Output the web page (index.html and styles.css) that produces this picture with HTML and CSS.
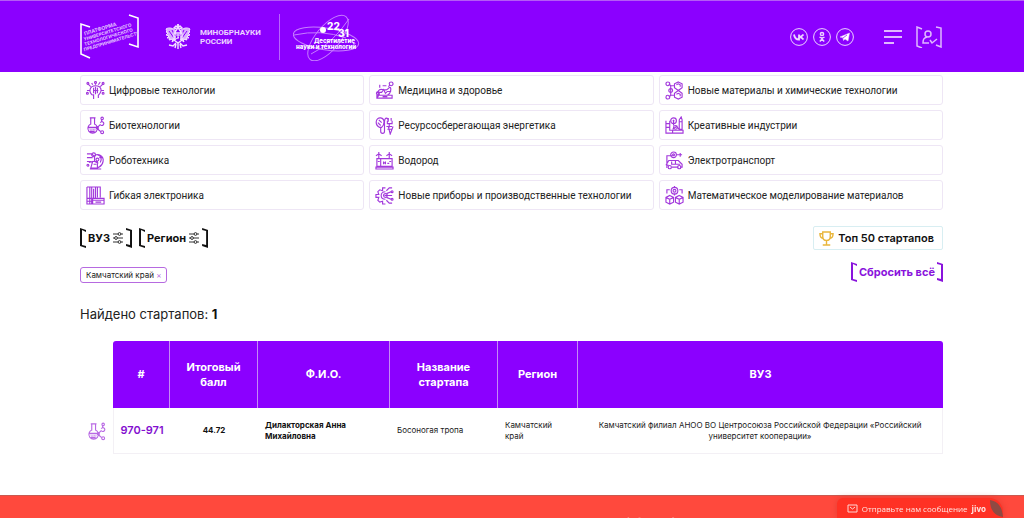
FILE: index.html
```html
<!DOCTYPE html>
<html lang="ru">
<head>
<meta charset="utf-8">
<meta name="viewport" content="width=device-width, initial-scale=1">
<title>Рейтинг стартапов</title>
<link rel="stylesheet" href="styles.css">
</head>
<body>
<svg class="defs" aria-hidden="true">
  <symbol id="flask" viewBox="0 0 20 20"><path d="M4 2h6M5 2v6.500a5 5 0 1 0 4 0V2M2.500 12h9M5 15h.5M8 14.500h.5M4 16.500h5M12 12l3-3M15 9a2 2 0 1 0 0-2M16.500 6V3.500M12.500 14l3 2.500"/><path d="M3 13h8l-2 4H5z" fill="#a238dc" fill-opacity=".35" stroke="none"/><circle cx="17" cy="2.500" r="1.300"/><circle cx="17" cy="17" r="1.500"/><circle cx="12" cy="12.500" r="1"/></symbol>
  <symbol id="filter" viewBox="0 0 12 12"><path d="M1 2h10M1 6h10M1 10h10"/><circle cx="7.500" cy="2" r="1.400"/><circle cx="4" cy="6" r="1.400"/><circle cx="7.500" cy="10" r="1.400"/></symbol>
</svg>

<header class="header">
  <a class="logo-platform" href="#" aria-label="Платформа университетского технологического предпринимательства">
    <svg width="59" height="46" viewBox="0 0 59 46">
      <path d="M10 13L1 10v30l9 4M49 1l9 3v29l-9-3" fill="none" stroke="#fff" stroke-width="1.600"/>
      <g transform="rotate(-17 5 36)" fill="#e3c2ff" font-size="5" font-weight="700"><text x="9" y="22">ПЛАТФОРМА</text><text x="7" y="27" font-size="4.500">УНИВЕРСИТЕТСКОГО</text><text x="6" y="32" font-size="4.500">ТЕХНОЛОГИЧЕСКОГО</text><text x="4" y="37" font-size="4.500">ПРЕДПРИНИМАТЕЛЬСТВА</text></g>
    </svg>
  </a>
  <a class="logo-ministry" href="#">
    <svg width="26" height="26" viewBox="0 0 26 26" fill="none" stroke="#f3e3ff">
      <path d="M11 7C8 4 4 3 1 5l1 2-1 1 2 1-2 2 3 1-2 2 3 0-1 2 4-1-1 3 4-3M15 7c3-3 7-4 10-2l-1 2 1 1-2 1 2 2-3 1 2 2-3 0 1 2-4-1 1 3-4-3" fill="#d9adff"/>
      <path d="M4 7l5 7M7 6l3 6M22 7l-5 7M19 6l-3 6" stroke="#8b00ff"/>
      <path d="M10 8l2-3-3-1 2-2 2 2 2-2 2 2-3 1 2 3M13 0v4M12 1h2M9 9h8v7l-4 3-4-3zM11 19l-3 3-4-1M15 19l3 3 4-1M13 18v7M11 20l-1 4M15 20l1 4" stroke-width="1.400"/>
      <path d="M11 11h4M13 10v5M11 15l3-2"/>
    </svg>
    <span>МИНОБРНАУКИ<br>РОССИИ</span>
  </a>
  <span class="header-rule"></span>
  <a class="logo-decade" href="#" aria-label="Десятилетие науки и технологий">
    <svg width="68" height="48" viewBox="0 0 68 48">
      <g fill="none" stroke="#c77dff"><ellipse cx="33" cy="26" rx="33" ry="11" transform="rotate(9 33 26)"/><ellipse cx="35" cy="25" rx="28" ry="12" transform="rotate(-50 35 25)"/><path d="M1 22q27-6 52 3M18 41Q39 31 56 6"/></g>
      <circle cx="30" cy="17" r="3" fill="#fff"/>
      <g fill="#fff" font-weight="800"><text x="34" y="17" font-size="10">22</text><text x="45" y="24" font-size="10">31</text><text x="21" y="30" font-size="6">Десятилетие</text><text x="3" y="36" font-size="6">науки и технологий</text></g>
    </svg>
  </a>
  <nav class="socials" aria-label="Социальные сети">
    <a href="#" aria-label="ВКонтакте"><svg viewBox="0 0 18 18"><circle cx="9" cy="9" r="8.400"/><path d="M4 6.500c.5 3.500 2 5 5 5v-5M13.500 6.500C12 8.500 11 9 9 9c2 0 3 .5 4.500 2.500" stroke-width="1.800"/></svg></a>
    <a href="#" aria-label="Одноклассники"><svg viewBox="0 0 18 18"><circle cx="9" cy="9" r="8.400"/><circle cx="9" cy="6" r="1.600" stroke-width="1.500"/><path d="M6.500 9q2.500 1.800 5 0M9 10v1l-2.200 2.500M9 11l2.200 2.500" stroke-width="1.500"/></svg></a>
    <a href="#" aria-label="Telegram"><svg viewBox="0 0 18 18"><circle cx="9" cy="9" r="8.400"/><path d="M4 9l9.500-4-1.500 8-3-2-1.500 1.500-.5-2.700z" fill="#fff" stroke-width=".5"/><path d="M7 10l4-3" stroke="#8b00ff" stroke-width=".7"/></svg></a>
  </nav>
  <button class="icon-button menu" type="button" aria-label="Меню"><svg width="20" height="16" viewBox="0 0 20 16"><path d="M1 2h18M1 8h18M1 14h10"/></svg></button>
  <button class="icon-button" type="button" aria-label="Профиль"><svg width="28" height="22" viewBox="0 0 28 22"><path d="M7 3L2 1v19l5 2M21 1l5 1v19l-5-2"/><circle cx="13" cy="8" r="3"/><path d="M12 11c-3 1-4 2-4 6h6M15 14l2 3 5-4"/></svg></button>
</header>

<main class="content">
  <nav class="topics" aria-label="Направления">
    <a href="#"><svg viewBox="0 0 20 20"><path d="M7 15c-5-4-3-10 3-10s8 5 3 10v3M8 14v5M10 4V2M5 6L2 3M15 6l3-3M4 10H1M16 10h3M8 7v6M10 6v8M12 7v6M8 10h5M13 4l2-3M7 4L6 2"/><circle cx="2" cy="2.500" r="1"/><circle cx="18" cy="2.500" r="1"/><circle cx="1.500" cy="13" r="1"/><circle cx="18" cy="13" r="1"/><circle cx="10" cy="1.500" r="1"/></svg>Цифровые технологии</a>
    <a href="#"><svg viewBox="0 0 20 20"><path d="M5 15C1 12 4 8 8 9s5 0 7-2 3 5-2 8M2 18h16v-3H2zM4 15l-2 3M8 16.500h5M2 12h5l2-3 2 4 2-2h4M5 7V4M8 5h4"/><circle cx="17" cy="3" r="2"/><circle cx="3" cy="13" r="1.500"/><path d="M14 6l2-2"/></svg>Медицина и здоровье</a>
    <a href="#"><svg viewBox="0 0 20 20"><path d="M14 1l4 2v4l-4 3-4-3V3zM14 10l4 3v4l-4 2-4-2v-4zM10 5H6L4 3M10 15H6l-2 2M6 5v10M12 4l2-1 2 1v2M12 14l2-1 2 1v2"/><circle cx="3" cy="3" r="2"/><circle cx="3" cy="17" r="2"/><circle cx="6" cy="10" r="2"/></svg>Новые материалы и химические технологии</a>
    <a href="#"><svg><use href="#flask"/></svg>Биотехнологии</a>
    <a href="#"><svg viewBox="0 0 20 20"><path d="M5 12C-1 9 1 1 6 2s4 7 1 10zM4 4l3 3M3 7l3 3M6 12v4c0 3 4 3 4 0V6c0-5 4-5 4 0M13 5v3h5V5M14 5V2M17 5V2M15 8v4M12 11h6M14 11l2 8 3-8M13 14h5"/></svg>Ресурсосберегающая энергетика</a>
    <a href="#"><svg viewBox="0 0 20 20"><path d="M1 5v13h18v-3H5V8M1 8h4M1 12h4M5 5v10M8 14l4-3 3 3M8 18v-3M15 4v10h3V4l-1-3zM15 6h3"/><circle cx="9" cy="5" r="3"/><circle cx="11" cy="12" r="2"/><path d="M8 5h2M9 4v6"/></svg>Креативные индустрии</a>
    <a href="#"><svg viewBox="0 0 20 20"><path d="M9 5c4-3 10 0 9 6s-4 5-6 7H5l2-7-4 1M9 5v6l4 2M12 4c4 1 5 4 3 8M7 11h5v7M1 3h5M1 7h6M1 11h4M6 3l3 3M4 19h12M14 7h3M8 14h3"/><circle cx="8" cy="4" r="2"/><circle cx="12" cy="9" r="1.500"/><circle cx="2" cy="15" r="1"/></svg>Роботехника</a>
    <a href="#"><svg viewBox="0 0 20 20"><path d="M2 8h16v8H2zM1 17h18v2H1zM4 8V1M1 5l3-2 3 2M15 8V1M12 5l3-2 3 2M6 8v8M9 11v3M11 11v3M9 12.500h2M13 13h2M3 11h2M15 11h2"/></svg>Водород</a>
    <a href="#"><svg viewBox="0 0 20 20"><path d="M2 18V5h6M2 15h2M1 15l3-5h10l4 4v3h-2M14 17H7M7 11v3h9M11 10v4M12 4h6M16 2v4"/><circle cx="9" cy="4" r="3"/><circle cx="9" cy="4" r="1"/><circle cx="5" cy="17" r="1.700"/><circle cx="15" cy="17" r="1.700"/></svg>Электротранспорт</a>
    <a href="#"><svg viewBox="0 0 20 20"><path d="M1 1h14v11M1 1v18h5V1M4 1v18M8 3v10M10 1v12M12 1v11M1 13h5M1 16h5M7 13h12v6H7zM7 15h12M10 17h6"/></svg>Гибкая электроника</a>
    <a href="#"><svg viewBox="0 0 20 20"><path d="M11 2H8v3L5 4 3 6l1 3H1v3h3l-1 3 2 2 3-1v3h3M11 6c-6 0-6 8 0 8M10 10h8M12 5l3-3h3M12 8l5-2M12 12l5 2M12 15l3 3h3"/><circle cx="11" cy="10" r="2"/><circle cx="18" cy="6" r="1"/><circle cx="18" cy="14" r="1"/></svg>Новые приборы и производственные технологии</a>
    <a href="#"><svg viewBox="0 0 20 20"><circle cx="10" cy="5" r="3.500"/><circle cx="10" cy="5" r="1.500"/><path d="M5 10l4 2v5l-4 2-4-2v-5zM15 10l4 2v5l-4 2-4-2v-5zM1 12l4 2 4-2M5 14v5M11 12l4 2 4-2M15 14v5M5 4H2v4M15 4h3v4M10 0v2M10 8v2"/></svg>Математическое моделирование материалов</a>
  </nav>

  <div class="toolbar">
    <div class="filters">
      <button class="bracket" type="button">ВУЗ <svg><use href="#filter"/></svg></button>
      <button class="bracket" type="button">Регион <svg><use href="#filter"/></svg></button>
    </div>
    <a class="top50" href="#"><svg viewBox="0 0 16 16"><path d="M4 1h8v5q0 4-4 4T4 6zM4 3H1q0 5 4 5M12 3h3q0 5-4 5M8 10v4M4 15h8"/></svg>Топ 50 стартапов</a>
  </div>
  <div class="applied">
    <button class="chip" type="button">Камчатский край <span>×</span></button>
    <button class="bracket reset" type="button">Сбросить всё</button>
  </div>
  <p class="found">Найдено стартапов: <b>1</b></p>

  <table class="results">
    <colgroup><col class="c-icon"><col class="c-rank"><col class="c-score"><col class="c-name"><col class="c-startup"><col class="c-region"><col></colgroup>
    <thead>
      <tr><td></td><th scope="col">#</th><th scope="col">Итоговый балл</th><th scope="col">Ф.И.О.</th><th scope="col">Название стартапа</th><th scope="col">Регион</th><th scope="col">ВУЗ</th></tr>
    </thead>
    <tbody>
      <tr><td class="topic"><svg><use href="#flask"/></svg></td><td class="rank">970-971</td><td class="score">44.72</td><td class="name">Дилакторская Анна Михайловна</td><td>Босоногая тропа</td><td>Камчатский край</td><td class="school">Камчатский филиал АНОО ВО Центросоюза Российской Федерации «Российский университет кооперации»</td></tr>
    </tbody>
  </table>
</main>

<footer class="footer">
  <a href="#">Новости</a>
  <a href="#">Направления</a>
  <a href="#">info@univtechpred.ru</a>
</footer>

<button class="chat" type="button">
  <svg class="mail" viewBox="0 0 11 9"><path d="M1 1h9v7H1zM3 3l2.500 2L8 3"/></svg>
  <span>Отправьте нам сообщение</span><b>jivo</b>
  <svg class="leaf" viewBox="0 0 13 17"><path d="M0 0q12 2 13 17Q0 15 0 0"/></svg>
</button>
</body>
</html>
```
FILE: styles.css
```css
* { box-sizing: border-box; }

body {
  display: flex;
  flex-direction: column;
  height: 100vh;
  margin: 0;
  overflow: hidden;
  background: #fff;
  color: #222;
  font-family: Inter, "Open Sans", sans-serif;
  font-size: 10px;
}

a { color: inherit; text-decoration: none; }
button { padding: 0; border: 0; background: none; color: inherit; font: inherit; cursor: pointer; }
svg { flex: none; }
.defs { position: absolute; width: 0; height: 0; }

.header {
  display: flex;
  flex: none;
  align-items: center;
  height: 72px;
  padding: 0 81px 0 80px;
  border-top: 1px solid #b45cf5;
  background: #8b00ff;
  color: #fff;
}
.header svg { display: block; }
.logo-ministry {
  display: flex;
  align-items: center;
  gap: 9px;
  margin-left: 26px;
  color: #ecd4ff;
  font-family: Roboto, sans-serif;
  font-size: 8px;
  font-weight: 700;
  line-height: 9px;
}
.header-rule { width: 1px; height: 46px; margin: 0 13px 0 18px; background: #b964ff; }
.socials { display: flex; gap: 5px; margin-left: auto; }
.socials svg { width: 18px; height: 18px; fill: none; stroke: #ecd4ff; }
.icon-button svg { fill: none; stroke: #e0b8ff; stroke-width: 2; }
.icon-button + .icon-button { margin-left: 12px; }
.icon-button + .icon-button svg { stroke-width: 1.5; }
.menu { margin-left: 29px; }

.content { flex: none; padding: 3px 81px 0 80px; }

.topics { display: grid; grid-template-columns: repeat(3, 1fr); gap: 5px; }
.topics a {
  display: flex;
  align-items: center;
  gap: 4px;
  height: 30px;
  padding-left: 5px;
  border: 1px solid #eee6f5;
  border-radius: 3px;
  font-family: Roboto, sans-serif;
  white-space: nowrap;
}
.topics svg, .topic svg { width: 19px; height: 19px; fill: none; stroke: #a238dc; stroke-width: 1.2; }

.toolbar, .applied, .filters { display: flex; align-items: center; }
.toolbar { justify-content: space-between; margin-top: 16px; }
.filters { gap: 7px; }
.bracket {
  position: relative;
  display: flex;
  align-items: center;
  gap: 2px;
  height: 20px;
  padding: 0 8px;
  color: #111;
  font-size: 11px;
  font-weight: 700;
}
.bracket::before, .bracket::after {
  content: "";
  position: absolute;
  top: 0;
  bottom: 0;
  width: 6px;
  background: currentColor;
}
.bracket::before { left: 0; clip-path: polygon(0 0, 100% 2px, 100% 4px, 2px 2px, 2px 17px, 100% 18px, 100% 100%, 0 18px); }
.bracket::after { right: 0; clip-path: polygon(0 0, 100% 2px, 100% 100%, 0 18px, 0 16px, 4px 17px, 4px 3px, 0 2px); }
.bracket svg { width: 12px; height: 12px; fill: #fff; stroke: #333; }
.top50 {
  display: flex;
  align-items: center;
  gap: 4px;
  height: 24px;
  padding: 0 8px 0 5px;
  border: 1px solid #d8eef2;
  border-radius: 2px;
  color: #111;
  font-size: 11px;
  font-weight: 600;
}
.top50 svg { width: 15px; height: 15px; fill: none; stroke: #e9b63c; stroke-width: 1.5; }

.applied { justify-content: space-between; height: 22px; margin-top: 11px; }
.chip {
  align-self: flex-end;
  height: 16px;
  padding: 0 5px;
  border: 1px solid #b66ae0;
  border-radius: 3px;
  font-size: 8px;
}
.chip span { color: #b66ae0; }
.reset { color: #8913dc; }
.found { margin: 22px 0 18px; font-size: 13px; line-height: 18px; }
.found b { color: #111; }

.results { width: 100%; border-collapse: separate; border-spacing: 0; table-layout: fixed; }
.c-icon { width: 33px; }
.c-rank { width: 57px; }
.c-score { width: 88px; }
.c-name { width: 132px; }
.c-startup { width: 108px; }
.c-region { width: 80px; }
.results th {
  height: 67px;
  padding: 0 16px;
  border-right: 1px solid #c58af5;
  background: #8b00ff;
  color: #fff;
  font-size: 11px;
  font-weight: 700;
  line-height: 15px;
}
.results th:nth-child(2) { border-top-left-radius: 3px; }
.results th:last-child { border-right: 0; border-top-right-radius: 3px; }
.results tbody td { height: 46px; padding: 0 7px; border-bottom: 1px solid #f3f0f5; font-size: 8px; line-height: 11px; }
.results tbody td:last-child { border-right: 1px solid #f3f0f5; }
.results tbody .topic { padding: 0 0 0 7px; border: 0; }
.topic svg { display: block; opacity: .75; }
.results tbody .rank { padding: 0; border-left: 1px solid #f3f0f5; color: #8310cf; font-size: 11px; font-weight: 600; text-align: center; }
.results .score, .results .name { color: #111; font-weight: 700; }
.results .score, .results .school { text-align: center; }

.footer {
  display: grid;
  flex: 1 0 0;
  grid-template-columns: 216px 331px 1fr;
  min-height: 0;
  margin-top: 41px;
  padding: 19px 81px 0 80px;
  overflow: hidden;
  border-top: 1px solid #c95a50;
  background: #ff493d;
  color: #ffd6d2;
  font-size: 11px;
  font-weight: 600;
}

.chat {
  position: fixed;
  right: 21px;
  bottom: 0;
  display: flex;
  align-items: center;
  gap: 4px;
  height: 20px;
  padding-left: 10px;
  border-radius: 6px 14px 0 0;
  background: #ff3124;
  box-shadow: 0 0 6px #b92c2466;
  color: #ffe4e1;
  font-family: "Open Sans", sans-serif;
  font-size: 8px;
}
.mail { width: 11px; height: 9px; fill: none; stroke: #ffd6d2; }
.leaf { width: 13px; height: 17px; fill: #8f4a43; }
```
